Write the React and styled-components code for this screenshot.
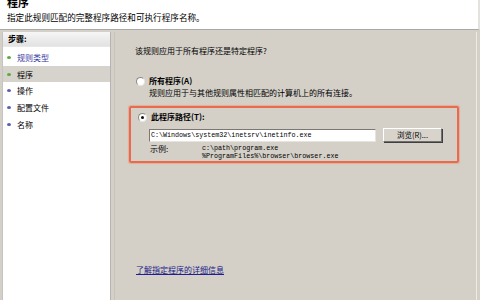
import React from "react";
import styled, { createGlobalStyle } from "styled-components";

const GlobalStyle = createGlobalStyle`
    html, body {
        margin: 0;
        padding: 0;
        background: #d4d0c8;
    }
    body {
        font-family: "Noto Sans CJK SC", "Liberation Sans", sans-serif;
        font-size: 8px;
        color: #000;
    }
`;

const steps = [
    { name: "规则类型", state: "done" },
    { name: "程序", state: "current" },
    { name: "操作", state: "todo" },
    { name: "配置文件", state: "todo" },
    { name: "名称", state: "todo" },
];

function App() {
    return (
        <Window>
            <GlobalStyle />
            <Header>
                <Title>程序</Title>
                <Subtitle>指定此规则匹配的完整程序路径和可执行程序名称。</Subtitle>
            </Header>

            <Body>
                <StepsPanel>
                    <StepsHeader>步骤:</StepsHeader>
                    {steps.map((s) => (
                        <StepItem key={s.name} $active={s.state === "current"} $link={s.state === "done"}>
                            <Bullet $green={s.state !== "todo"} />
                            {s.name}
                        </StepItem>
                    ))}
                </StepsPanel>

                <MainPanel>
                    <Question>该规则应用于所有程序还是特定程序?</Question>

                    <OptionRow>
                        <Radio />
                        <OptionLabel>所有程序(A)</OptionLabel>
                    </OptionRow>
                    <OptionDesc>规则应用于与其他规则属性相匹配的计算机上的所有连接。</OptionDesc>

                    <Highlight>
                        <BoxRow>
                            <Radio $checked />
                            <OptionLabel>此程序路径(T):</OptionLabel>
                        </BoxRow>
                        <PathRow>
                            <PathInput>C:\Windows\system32\inetsrv\inetinfo.exe</PathInput>
                            <BrowseButton>浏览(R)...</BrowseButton>
                        </PathRow>
                        <ExampleRow>
                            <ExampleLabel>示例:</ExampleLabel>
                            <ExampleList>
                                <Mono>c:\path\program.exe</Mono>
                                <Mono>%ProgramFiles%\browser\browser.exe</Mono>
                            </ExampleList>
                        </ExampleRow>
                    </Highlight>

                    <HelpLink>了解指定程序的详细信息</HelpLink>
                </MainPanel>
            </Body>
        </Window>
    );
}

const Window = styled.div`
    width: 480px;
    height: 300px;
    display: flex;
    flex-direction: column;
    overflow: hidden;
    background: #d4d0c8;
`;

// 상단 흰색 제목 영역
const Header = styled.div`
    height: 30px;
    flex-shrink: 0;
    background: #fff;
    border-bottom: 1px solid #a8a8a8;
    border-right: 2px solid #e4e2dc;
    padding-left: 7px;
    box-sizing: border-box;
    overflow: hidden;
`;

const Title = styled.div`
    font-size: 11px;
    font-weight: bold;
    line-height: 11px;
    margin-top: -3px;
    height: 11px;
`;

const Subtitle = styled.div`
    font-size: 8.6px;
    line-height: 10px;
    margin-top: 4px;
`;

const Body = styled.div`
    flex: 1;
    display: flex;
    padding: 2px 3px 0 2px;
    min-height: 0;
`;

// 왼쪽 단계 목록
const StepsPanel = styled.div`
    width: 109px;
    background: #fff;
    border-left: 1px solid #c4c4c4;
    border-right: 1px solid #b4b4b4;
    box-sizing: border-box;
    flex-shrink: 0;
`;

const StepsHeader = styled.div`
    height: 14px;
    line-height: 14px;
    font-weight: bold;
    padding-left: 5px;
    background: linear-gradient(#f6f6f6, #e2e2e2);
    border-bottom: 1px solid #e8e8e8;
    margin-bottom: 2px;
`;

const StepItem = styled.div`
    height: 16.7px;
    display: flex;
    align-items: center;
    gap: 6px;
    padding-left: 4px;
    color: ${(p) => (p.$link ? "#3636a0" : "#000")};
    background: ${(p) => (p.$active ? "#d6d3cc" : "transparent")};
`;

const Bullet = styled.span`
    width: 4px;
    height: 3px;
    border-radius: 50%;
    background: ${(p) => (p.$green ? "#5fa83a" : "#5c5cb4")};
`;

// 오른쪽 내용 영역
const MainPanel = styled.div`
    flex: 1;
    display: flex;
    flex-direction: column;
    margin-left: 3px;
    border-left: 1px solid #c8c4bc;
    border-right: 1px solid #ecebe6;
    padding: 14px 14px 25px 14px;
    box-sizing: border-box;
`;

const Question = styled.div`
    margin-left: 6px;
    line-height: 10px;
`;

const OptionRow = styled.div`
    display: flex;
    align-items: center;
    gap: 4px;
    margin: 20px 0 0 7px;
    height: 10px;
`;

const Radio = styled.span`
    width: 7px;
    height: 7px;
    border-radius: 50%;
    background: #fff;
    border: 1px solid #8c8a84;
    border-right-color: #e8e6e0;
    border-bottom-color: #e8e6e0;
    position: relative;
    flex-shrink: 0;

    &::after {
        content: "";
        display: ${(p) => (p.$checked ? "block" : "none")};
        position: absolute;
        left: 2px;
        top: 2px;
        width: 3px;
        height: 3px;
        border-radius: 50%;
        background: #111;
    }
`;

const OptionLabel = styled.span`
    font-weight: bold;
    line-height: 10px;
`;

const OptionDesc = styled.div`
    margin: 2px 0 0 20px;
    line-height: 10px;
`;

const Highlight = styled.div`
    margin-top: 8px;
    height: 57px;
    width: 330px;
    border: 2px solid #e86b4e;
    border-radius: 2px;
    box-shadow: 0 0 1px 1px rgba(240, 140, 110, 0.5);
    box-sizing: border-box;
    padding: 2px 0 0 7px;
`;

const BoxRow = styled.div`
    display: flex;
    align-items: center;
    gap: 4px;
    height: 10px;
    margin-top: 2px;
`;

const PathRow = styled.div`
    display: flex;
    align-items: center;
    gap: 7px;
    margin: 6px 0 0 11px;
`;

const PathInput = styled.div`
    width: 227px;
    height: 13px;
    box-sizing: border-box;
    background: #fff;
    border: 1px solid #7a7870;
    border-right-color: #e6e4de;
    border-bottom-color: #e6e4de;
    font-family: "Liberation Mono", monospace;
    font-size: 6.7px;
    line-height: 11px;
    padding-left: 1px;
    white-space: nowrap;
    overflow: hidden;
`;

const BrowseButton = styled.div`
    width: 59px;
    height: 14px;
    box-sizing: border-box;
    background: #d8d4cc;
    border: 1px solid #fff;
    border-right-color: #707070;
    border-bottom-color: #707070;
    box-shadow: 1px 1px 0 #404040;
    font-size: 7.5px;
    line-height: 12px;
    text-align: center;
`;

const ExampleRow = styled.div`
    display: flex;
    margin: 2px 0 0 12px;
`;

const ExampleLabel = styled.span`
    width: 52px;
    line-height: 10px;
    margin-top: 0;
`;

const ExampleList = styled.div`
    display: flex;
    flex-direction: column;
`;

const Mono = styled.span`
    font-family: "Liberation Mono", monospace;
    font-size: 6.7px;
    line-height: 8px;
`;

const HelpLink = styled.a`
    margin-top: auto;
    margin-left: 7px;
    color: #20208a;
    text-decoration: underline;
    line-height: 10px;
    cursor: pointer;
`;

export default App;
